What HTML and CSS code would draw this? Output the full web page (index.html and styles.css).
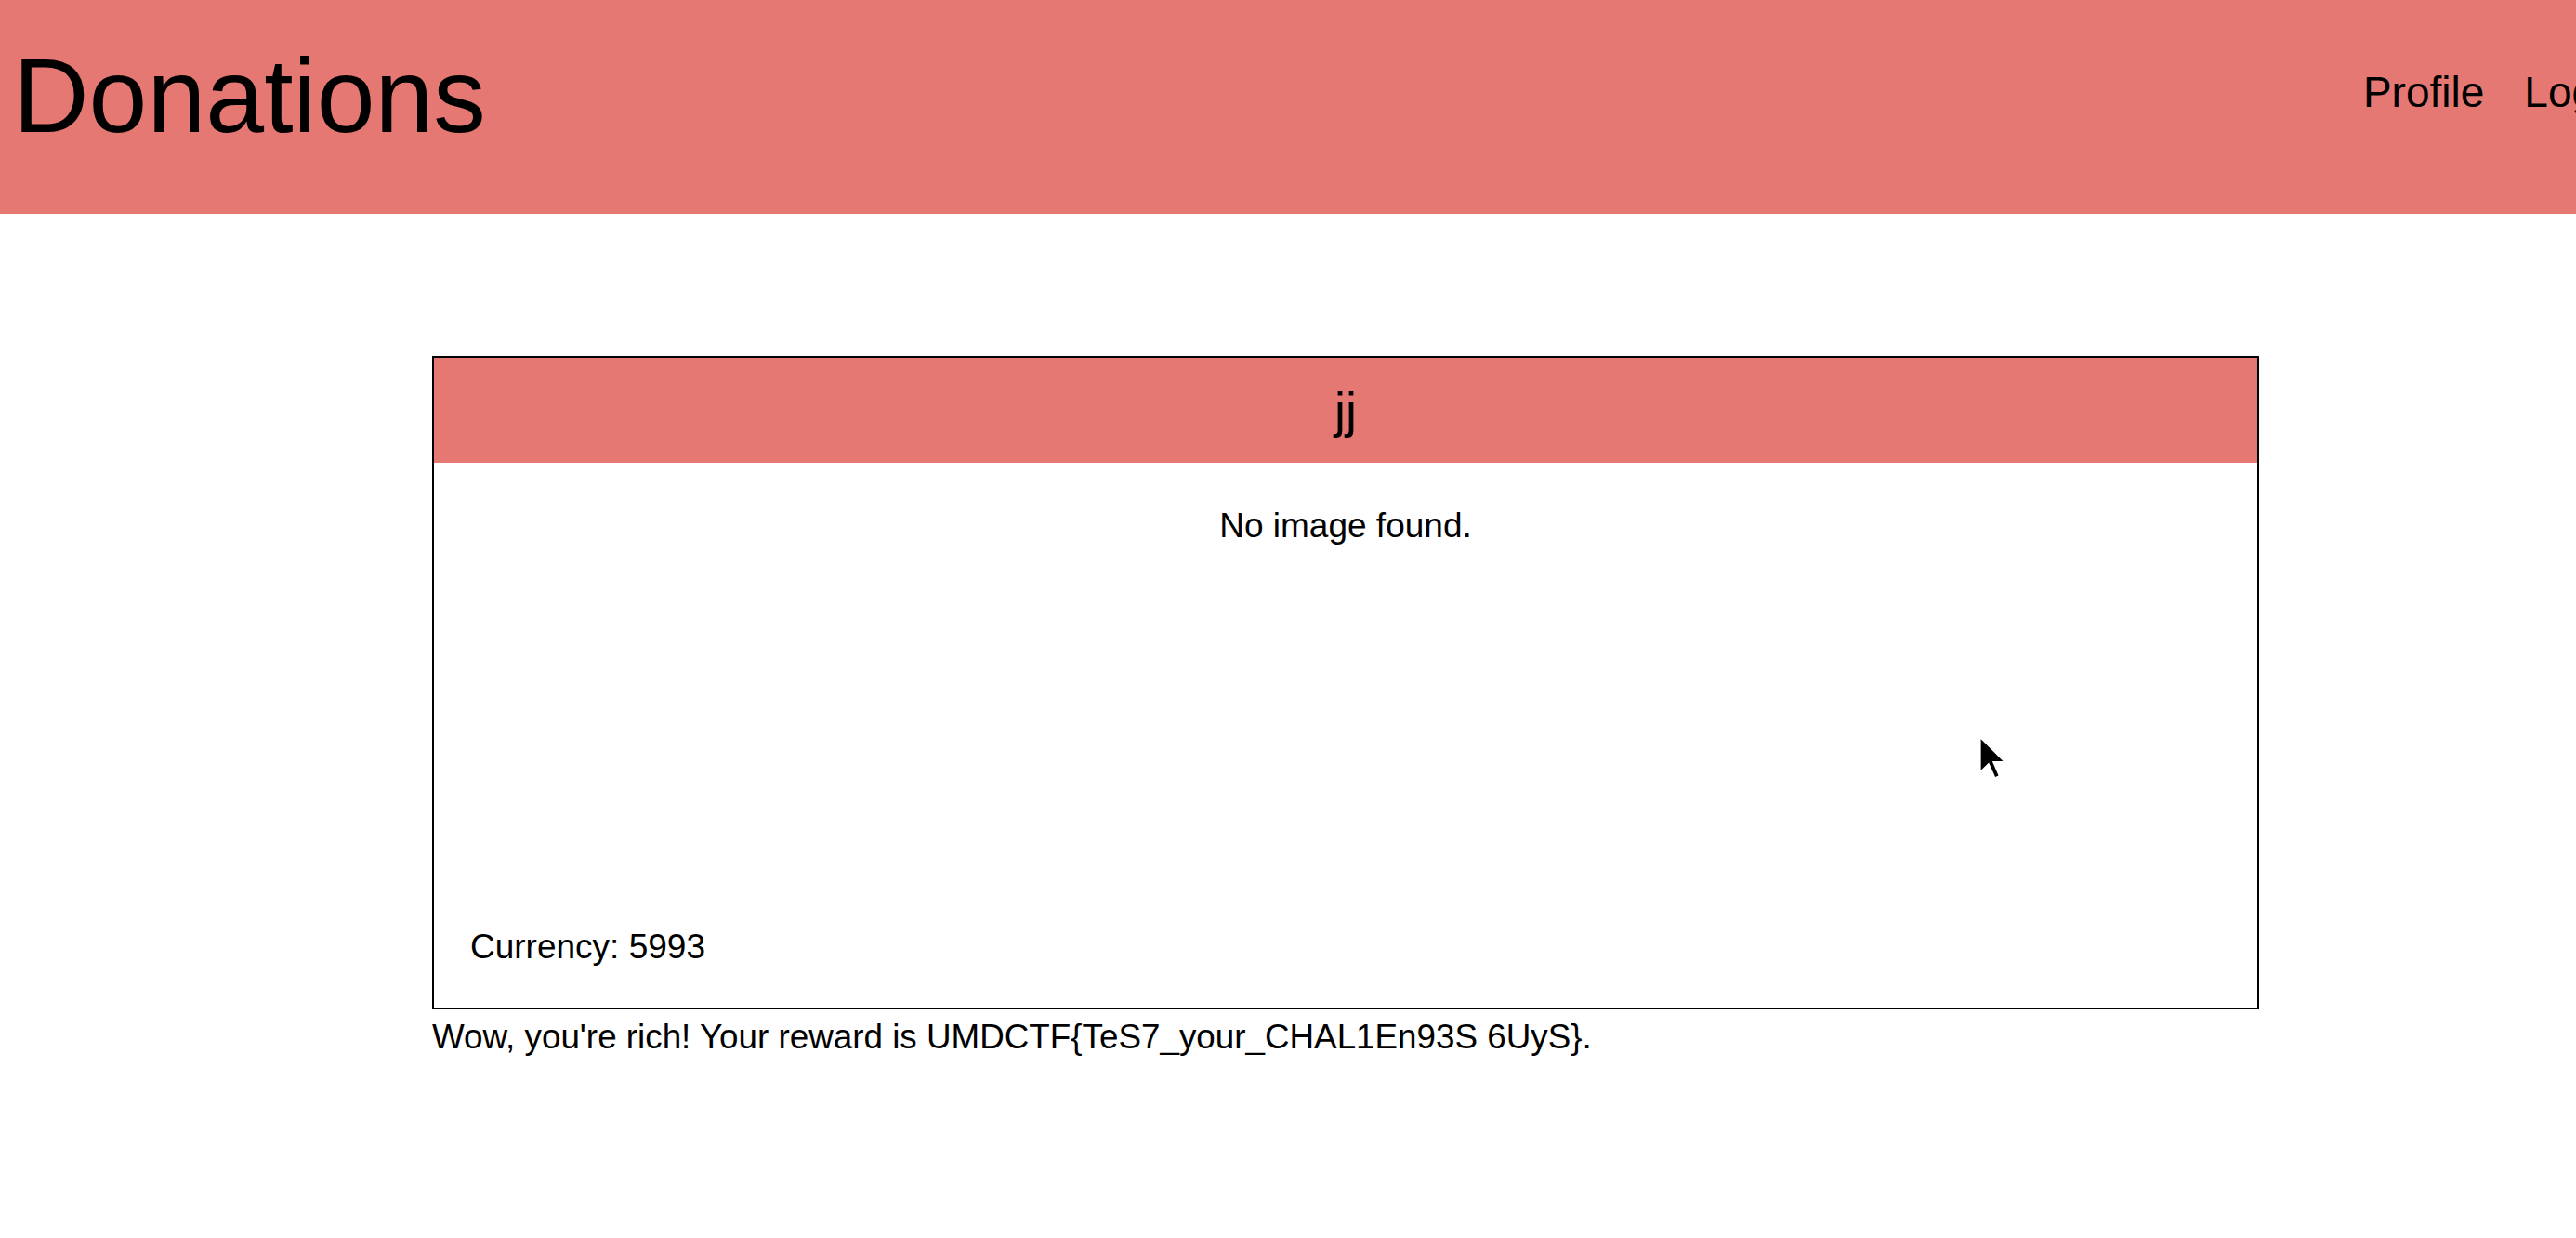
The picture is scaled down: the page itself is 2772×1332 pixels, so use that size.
FILE: index.html
```html
<!DOCTYPE html>
<html lang="en">
<head>
<meta charset="utf-8">
<title>Donations</title>
<link rel="stylesheet" href="styles.css">
</head>
<body>
<div class="page">
  <header class="topbar">
    <h1 class="brand">Donations</h1>
    <nav class="nav">
      <a class="nav-link" href="#">Profile</a>
      <a class="nav-link" href="#">Logout</a>
    </nav>
  </header>
  <main class="main">
    <section class="card">
      <h2 class="card-title">jj</h2>
      <div class="card-body">
        <p class="no-image">No image found.</p>
        <p class="currency">Currency: 5993</p>
      </div>
    </section>
    <p class="reward">Wow, you're rich! Your reward is UMDCTF{TeS7_your_CHAL1En93S 6UyS}.</p>
  </main>
</div>
<svg class="cursor" width="30" height="48" viewBox="0 0 12 19.2" aria-hidden="true">
  <path d="M0.6 0.6 L0.6 16.2 L4.3 12.6 L7 18.6 L9.2 17.6 L6.6 11.6 L11.6 11.6 Z" fill="#000" stroke="#fff" stroke-width="0.9" stroke-linejoin="miter"/>
</svg>
</body>
</html>
```
FILE: styles.css
```css
html, body {
  margin: 0;
  padding: 0;
  overflow: hidden;
  background: #ffffff;
}

body {
  font-family: "Liberation Sans", Arial, sans-serif;
  color: #000;
  position: relative;
  height: 1332px;
}

.page {
  width: 2896px;
}

.topbar {
  display: flex;
  justify-content: space-between;
  align-items: flex-start;
  height: 230px;
  box-sizing: border-box;
  padding: 0 39px 0 14px;
  background: #e57873;
}

.brand {
  margin: 47px 0 0 0;
  font-size: 113px;
  font-weight: normal;
  line-height: 113px;
  letter-spacing: 0;
}

.nav {
  display: flex;
  gap: 43px;
  margin-top: 76px;
}

.nav-link {
  font-size: 46px;
  line-height: 46px;
  color: #000;
  text-decoration: none;
}

.main {
  width: 1966px;
  margin: 153px auto 0;
}

.card {
  box-sizing: border-box;
  border: 2px solid #000;
  width: 100%;
}

.card-title {
  margin: 0;
  height: 113px;
  line-height: 113px;
  font-size: 54px;
  font-weight: normal;
  text-align: center;
  background: #e57873;
}

.card-body {
  display: flex;
  flex-direction: column;
  justify-content: space-between;
  height: 586px;
  box-sizing: border-box;
  padding: 47px 39px 44px;
}

.no-image,
.currency,
.reward {
  margin: 0;
  font-size: 37px;
}

.no-image {
  text-align: center;
}

.reward {
  margin-top: 9px;
  font-size: 36.8px;
}

.cursor {
  position: absolute;
  left: 2129px;
  top: 791px;
}
```
